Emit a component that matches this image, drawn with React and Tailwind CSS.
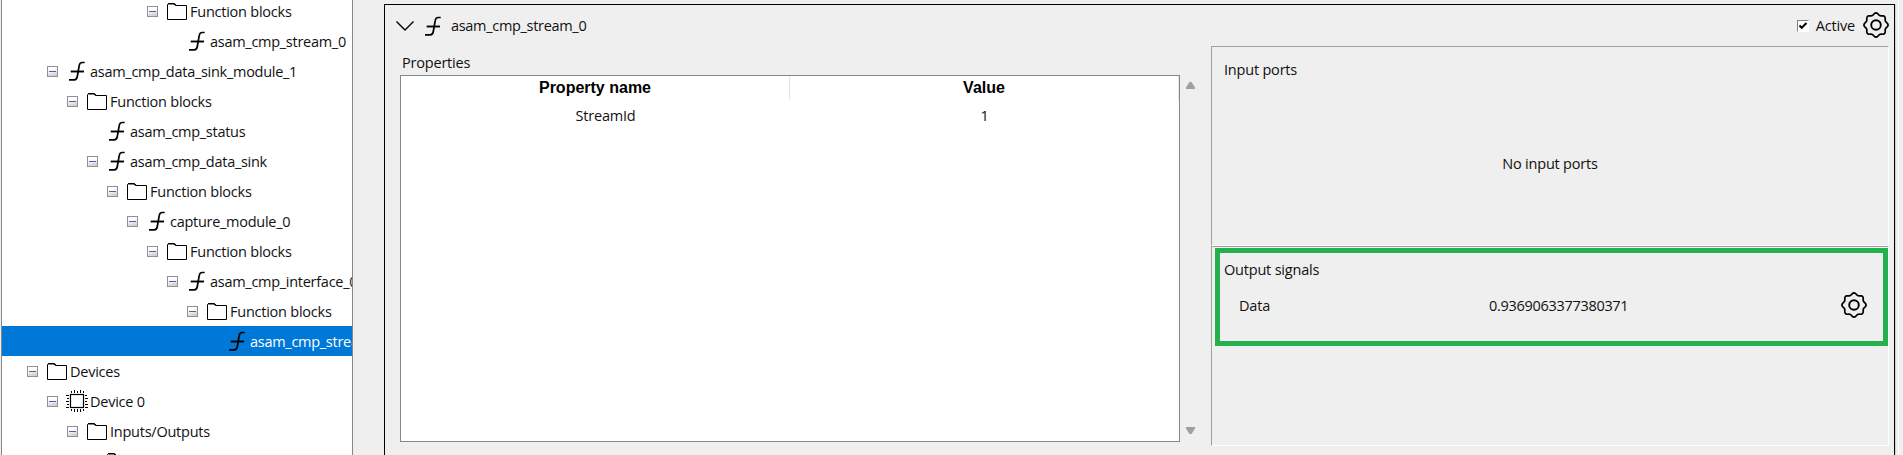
const UI = "font-['Open_Sans','Noto_Sans',sans-serif]";

function Expander() {
  return (
    <svg width="11" height="11" viewBox="0 0 11 11" shapeRendering="crispEdges" className="shrink-0">
      <defs>
        <linearGradient id="exp" x1="0" y1="0" x2="0.3" y2="1">
          <stop offset="0.4" stopColor="#fff" />
          <stop offset="1" stopColor="#d0d0d0" />
        </linearGradient>
      </defs>
      <rect x="0.5" y="0.5" width="10" height="10" fill="url(#exp)" stroke="#919191" />
      <path d="M2 5.5h7" stroke="#4b63a7" />
    </svg>
  );
}

function FuncIcon() {
  return (
    <svg width="24" height="24" viewBox="0 0 24 24" fill="none" stroke="#000" className="shrink-0">
      <path d="M18.700 3.500h-2.500c-1.900 0-2.700 1.100-3 3.200L11.300 17.500c-.4 2.400-1.100 3.400-3 3.400H3" strokeWidth="1.700" />
      <path d="M4.700 12.500h13.300" strokeWidth="1.900" />
    </svg>
  );
}

function FolderIcon() {
  return (
    <svg width="24" height="24" viewBox="0 0 24 24" fill="none" stroke="#000" className="shrink-0">
      <path d="M1.500 20.500V5.500l1-1h5.500l2 2h10.500v14z" />
      <path d="M2 4.800h6l2 1.700" strokeWidth="1.500" />
    </svg>
  );
}

function ChipIcon() {
  return (
    <svg width="24" height="24" viewBox="0 0 24 24" fill="none" stroke="#000" className="shrink-0">
      <rect x="4.500" y="5.500" width="13" height="13" strokeWidth="1.200" />
      <path d="M5.500 2v2M8.500 1v3M11.500 2v2M14.500 1v3M17.500 2v2M5.500 20v2M8.500 20v3M11.500 20v3M14.500 20v3M17.500 20v2M0 6.500h3M1 9.500h2M0 12.500h3M1 15.500h2M0 18.500h3M19 6.500h2M19 9.500h3M19 12.500h2M19 15.500h3M19 18.500h3" />
    </svg>
  );
}

// Eight-lobed wavy outline around the hub.
const gearOutline = Array.from({ length: 96 }, (_, i) => {
  const a = (i / 96) * Math.PI * 2;
  const r = 11.1 + 0.95 * Math.cos(8 * a);
  return `${(13 + r * Math.cos(a)).toFixed(2)},${(13 + r * Math.sin(a)).toFixed(2)}`;
}).join(" ");

function GearIcon() {
  return (
    <svg width="26" height="26" viewBox="0 0 26 26" fill="none" stroke="#000" strokeWidth="1.700" strokeLinejoin="round" className="shrink-0">
      <polygon points={gearOutline} />
      <circle cx="13" cy="13" r="4.800" strokeWidth="1.900" />
    </svg>
  );
}

const icons = { func: FuncIcon, folder: FolderIcon, chip: ChipIcon };

const rows = [
  { pad: "pl-[145px]", icon: "folder", text: "Function blocks", open: true },
  { pad: "pl-[165px]", icon: "func", text: "asam_cmp_stream_0" },
  { pad: "pl-[45px]", icon: "func", text: "asam_cmp_data_sink_module_1", open: true },
  { pad: "pl-[65px]", icon: "folder", text: "Function blocks", open: true },
  { pad: "pl-[85px]", icon: "func", text: "asam_cmp_status" },
  { pad: "pl-[85px]", icon: "func", text: "asam_cmp_data_sink", open: true },
  { pad: "pl-[105px]", icon: "folder", text: "Function blocks", open: true },
  { pad: "pl-[125px]", icon: "func", text: "capture_module_0", open: true },
  { pad: "pl-[145px]", icon: "folder", text: "Function blocks", open: true },
  { pad: "pl-[165px]", icon: "func", text: "asam_cmp_interface_0", open: true },
  { pad: "pl-[185px]", icon: "folder", text: "Function blocks", open: true },
  { pad: "pl-[205px]", icon: "func", text: "asam_cmp_stream_0", selected: true },
  { pad: "pl-[25px]", icon: "folder", text: "Devices", open: true },
  { pad: "pl-[45px]", icon: "chip", text: "Device 0", open: true },
  { pad: "pl-[65px]", icon: "folder", text: "Inputs/Outputs", open: true },
  { pad: "pl-[85px]", icon: "folder", text: "" },
];

function TreeRow({ pad, icon, text, open, selected }) {
  const Icon = icons[icon];
  return (
    <div className={`flex h-[30px] shrink-0 items-center whitespace-nowrap ${pad} ${selected ? "bg-[#0078d7] text-white" : ""}`}>
      <span className="mt-2.5 mr-2 w-[11px] shrink-0 self-start">{open && <Expander />}</span>
      <Icon />
      <span className={`pt-0.5 ${icon === "func" ? "tracking-[-0.28px]" : "tracking-[-0.24px]"}`}>{text}</span>
    </div>
  );
}

export default function App() {
  return (
    <div className={`flex h-[455px] w-[1903px] overflow-hidden bg-[#efefef] text-[14.5px] leading-5 tracking-[-0.2px] text-[#111] ${UI}`}>
      <aside className="ml-px flex w-[352px] shrink-0 flex-col overflow-hidden border-x border-[#828790] bg-white">
        <div className="-mt-1 flex flex-col">
          {rows.map((r, i) => (
            <TreeRow key={i} {...r} />
          ))}
        </div>
      </aside>

      <main className="mt-1 ml-[31px] flex h-[470px] w-[1511px] shrink-0 flex-col border border-black">
        <header className="flex h-[41px] shrink-0 items-center pl-[11px] pr-[5px]">
          <svg width="18" height="12" viewBox="0 0 18 12" fill="none" stroke="#000" strokeWidth="1.400">
            <path d="M.5 1.500L9 10l8.500-8.500" />
          </svg>
          <span className="ml-2 flex"><FuncIcon /></span>
          <span className="ml-[5px] tracking-[-0.31px]">asam_cmp_stream_0</span>
          <span className="ml-auto flex h-3 w-3 border border-t-[#808080] border-r-white border-b-white border-l-[#808080] bg-white">
            <svg width="10" height="10" viewBox="0 0 10 10" fill="none" stroke="#000" strokeWidth="2">
              <path d="M1.500 4.500l2.200 2.300L8.500 2" />
            </svg>
          </span>
          <span className="mr-2 ml-[7px]">Active</span>
          <span className="-mt-px flex"><GearIcon /></span>
        </header>

        <div className="flex">
          <section className="w-[826px] shrink-0 pt-[7px] pl-[15px]">
            <h2 className="pl-0.5">Properties</h2>
            <div className="flex">
              <div className="mt-0.5 h-[367px] w-[780px] shrink-0 border border-[#828790] bg-white">
                <div className="flex h-6 text-center font-['Liberation_Sans',Arial,sans-serif] text-[16px] font-bold tracking-normal text-black">
                  <div className="w-[389px] border-r border-[#e5e5e5] pt-0.5">Property name</div>
                  <div className="flex-1 border-r border-[#e5e5e5] pt-0.5">Value</div>
                </div>
                <div className="flex pt-1.5 text-center">
                  <div className="w-[389px] pl-5">StreamId</div>
                  <div className="flex-1">1</div>
                </div>
              </div>
              <div className="ml-1.5 flex h-[368px] flex-col justify-between pt-[9px] pb-[7px]">
                <svg width="9" height="7" viewBox="0 0 9 7"><path d="M0 7V5.500L3.500 0h2L9 5.500V7z" fill="#a0a0a0" /></svg>
                <svg width="9" height="7" viewBox="0 0 9 7"><path d="M0 0v1.500L3.500 7h2L9 1.500V0z" fill="#a0a0a0" /></svg>
              </div>
            </div>
          </section>

          <section className="flex w-[678px] flex-col">
            <div className="flex h-[200px] flex-col border border-t-[#a0a0a0] border-r-white border-b-white border-l-[#a0a0a0]">
              <h2 className="pt-[13px] pl-3">Input ports</h2>
              <p className="mt-[74px] text-center">No input ports</p>
            </div>
            <div className="h-[200px] border border-t-[#a0a0a0] border-r-white border-b-white border-l-[#a0a0a0]">
              <div className="mt-px ml-[3px] h-[98px] border-[5px] border-[#22b14c]">
                <h2 className="pt-[7px] pl-1">Output signals</h2>
                <div className="mt-3 flex items-center pr-4 pl-[19px]">
                  <span className="w-[250px] pt-px">Data</span>
                  <span className="pt-px tracking-[-0.3px]">0.9369063377380371</span>
                  <span className="ml-auto"><GearIcon /></span>
                </div>
              </div>
            </div>
          </section>
        </div>
      </main>
      <div className="mt-1 w-px bg-[#d4d4d4]" />
      <div className="ml-[2px] w-px bg-white" />
    </div>
  );
}
